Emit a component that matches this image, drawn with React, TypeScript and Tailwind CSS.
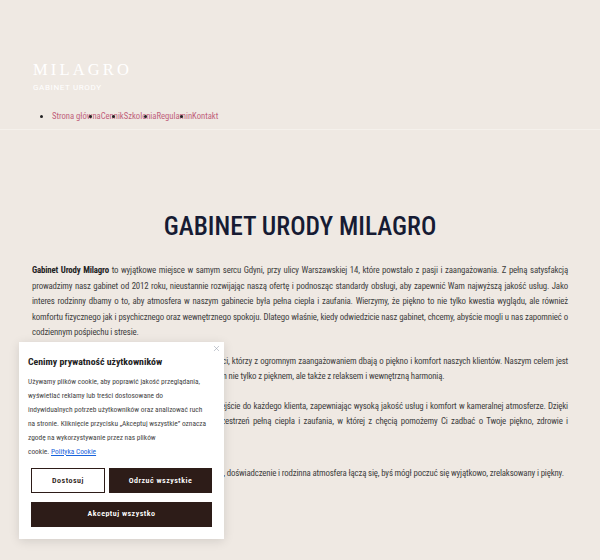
import { X } from 'lucide-react';

const body = '"Roboto Condensed", "Liberation Sans Narrow", "DejaVu Sans Condensed", Roboto, sans-serif';

const navItems = ['Strona główna', 'Cennik', 'Szkolenia', 'Regulamin', 'Kontakt'];

function CookieBanner() {
  return (
    <div className="absolute left-[19px] top-[342px] w-[205px] bg-white shadow-[0_2px_10px_rgba(0,0,0,0.12)] px-[9px] pt-[13px] pb-[12px]">
      <button className="absolute right-[3px] top-[2px] text-gray-400">
        <X className="w-[9px] h-[9px]" strokeWidth={1.5} />
      </button>
      <h2 className="text-[9.8px] font-bold text-[#222] leading-[14px] mb-[6px]" style={{ fontFamily: body }}>
        Cenimy prywatność użytkowników
      </h2>
      <p className="text-[7.4px] leading-[14px] text-[#444]" style={{ fontFamily: body }}>
        Używamy plików cookie, aby poprawić jakość przeglądania,
        <br />
        wyświetlać reklamy lub treści dostosowane do
        <br />
        indywidualnych potrzeb użytkowników oraz analizować ruch
        <br />
        na stronie. Kliknięcie przycisku „Akceptuj wszystkie” oznacza
        <br />
        zgodę na wykorzystywanie przez nas plików
        <br />
        cookie. <a className="text-[#1863dc] underline">Polityka Cookie</a>
      </p>
      <div className="mx-[3px] mt-[9px] flex gap-[4px]">
        <button className="w-[74px] h-[25px] border border-[#2d1c18] bg-white text-[#2d1c18] text-[8px] font-semibold tracking-[0.06em]" style={{ fontFamily: body }}>
          Dostosuj
        </button>
        <button className="flex-1 h-[25px] bg-[#2d1c18] text-white text-[8px] font-semibold tracking-[0.06em]" style={{ fontFamily: body }}>
          Odrzuć wszystkie
        </button>
      </div>
      <div className="mx-[3px] mt-[6px]">
        <button className="w-full h-[25px] bg-[#2d1c18] text-white text-[8px] font-semibold tracking-[0.06em]" style={{ fontFamily: body }}>
          Akceptuj wszystko
        </button>
      </div>
    </div>
  );
}

export default function App() {
  return (
    <div className="relative min-h-[560px] bg-[#efe9e3] overflow-hidden" style={{ fontFamily: body }}>
      <header className="px-[33px] pt-[60px] pb-[7px] border-b border-[#f5f1ec]">
        <div className="text-white text-[16.5px] tracking-[0.19em] leading-[20px]" style={{ fontFamily: '"Liberation Serif", serif' }}>
          MILAGRO
        </div>
        <div className="text-white text-[8px] leading-[10px] mt-[3px] tracking-[0.08em]" style={{ fontFamily: 'Roboto, sans-serif' }}>
          GABINET URODY
        </div>
        <nav className="mt-[17px]">
          <ul className="flex list-disc pl-[19px] text-[8.6px] leading-[12px] text-[#c0607a]">
            {navItems.map((item) => (
              <li key={item} className="marker:text-[#222]">
                <a>{item}</a>
              </li>
            ))}
          </ul>
        </nav>
      </header>

      <main className="px-[32px] pt-[81px]">
        <h1 className="text-center text-[25.5px] font-medium text-[#161b33] leading-[30px]">GABINET URODY MILAGRO</h1>
        <div className="mt-[22px] text-[8.8px] leading-[15.5px] tracking-[-0.15px] text-[#3d3d3d] text-justify">
          <p>
            <strong className="text-[#222]">Gabinet Urody Milagro</strong> to wyjątkowe miejsce w samym sercu Gdyni, przy ulicy Warszawskiej 14, które powstało z pasji i zaangażowania. Z pełną satysfakcją prowadzimy nasz gabinet od 2012 roku, nieustannie rozwijając naszą ofertę i podnosząc standardy obsługi, aby zapewnić Wam najwyższą jakość usług. Jako interes rodzinny dbamy o to, aby atmosfera w naszym gabinecie była pełna ciepła i zaufania. Wierzymy, że piękno to nie tylko kwestia wyglądu, ale również komfortu fizycznego jak i psychicznego oraz wewnętrznego spokoju. Dlatego właśnie, kiedy odwiedzicie nasz gabinet, chcemy, abyście mogli u nas zapomnieć o codziennym pośpiechu i stresie.
          </p>
          <p className="mt-[13px]">
            Nasz zespół to doświadczeni i wykwalifikowani specjaliści, którzy z ogromnym zaangażowaniem dbają o piękno i komfort naszych klientów. Naszym celem jest stworzenie miejsca, które zawsze kojarzyć się będzie Wam nie tylko z pięknem, ale także z relaksem i wewnętrzną harmonią.
          </p>
          <p className="mt-[14px]">
            W Milagro stawiamy na profesjonalne, indywidualne podejście do każdego klienta, zapewniając wysoką jakość usług i komfort w kameralnej atmosferze. Dzięki temu udało nam się stworzyć dla naszych klientów przestrzeń pełną ciepła i zaufania, w której z chęcią pomożemy Ci zadbać o Twoje piękno, zdrowie i samopoczucie, w miłej atmosferze.
          </p>
          <p className="mt-[21px]">
            Zapraszamy Was do salonu Milagro, gdzie profesjonalizm, doświadczenie i rodzinna atmosfera łączą się, byś mógł poczuć się wyjątkowo, zrelaksowany i piękny.
          </p>
        </div>
      </main>

      <CookieBanner />
    </div>
  );
}
